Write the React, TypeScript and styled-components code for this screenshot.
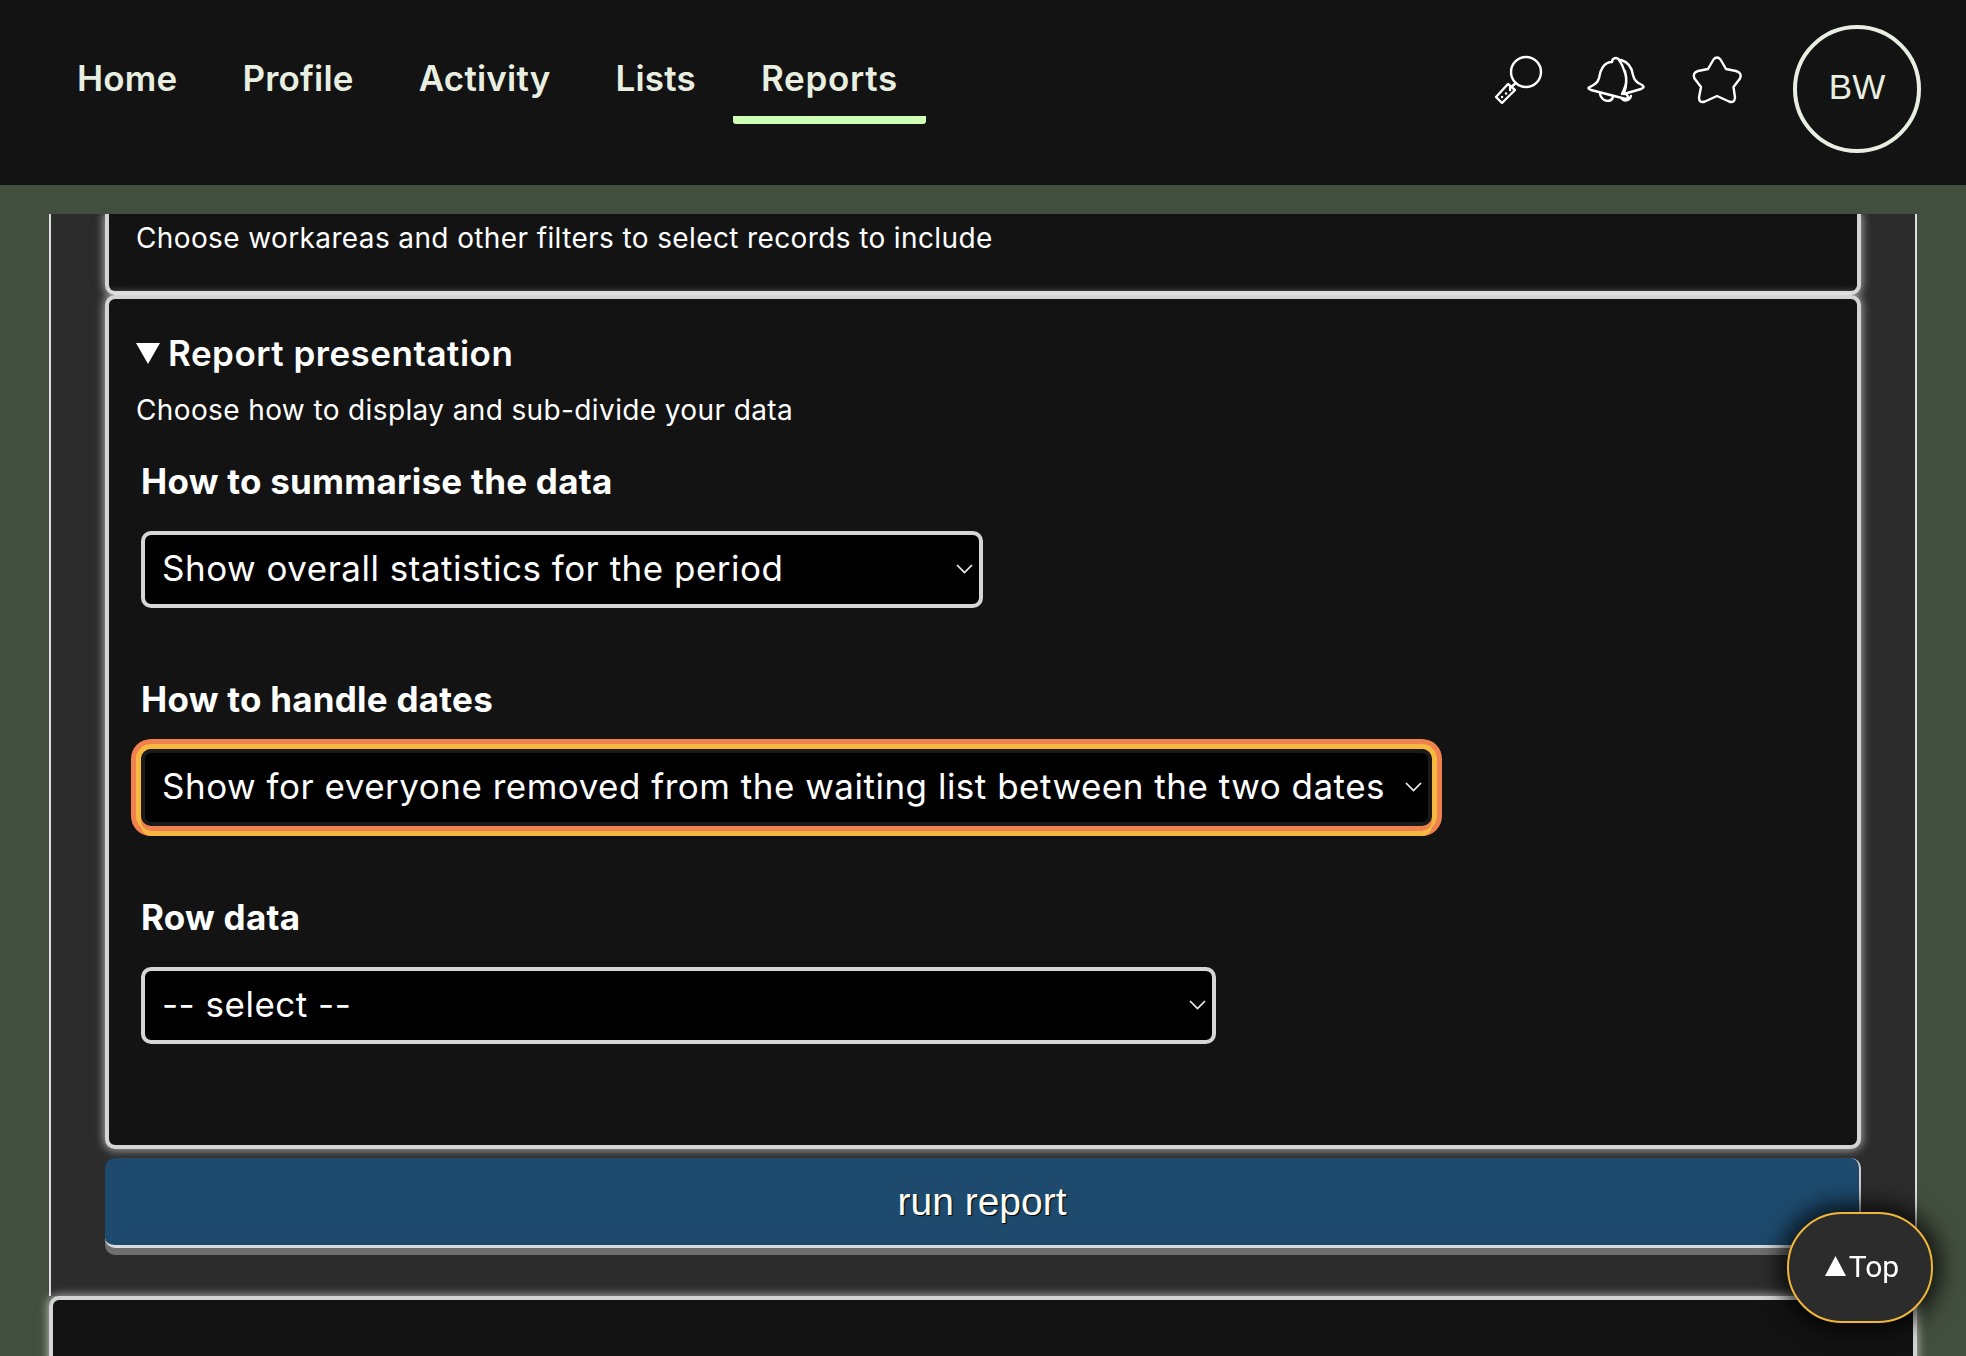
import styled, { createGlobalStyle } from 'styled-components'

const GlobalStyle = createGlobalStyle`
    html, body {
        margin: 0;
        padding: 0;
        background-color: #434f3e;
    }

    * {
        box-sizing: border-box;
    }
`

const Page = styled.div`
    display: flex;
    flex-direction: column;
    height: 100vh;
    overflow: hidden;
    font-family: Inter, "Noto Sans", sans-serif;
    color: #fff;
`

const Header = styled.header`
    display: flex;
    flex: 0 0 185px;
    justify-content: space-between;
    padding: 0 45px 0 49px;
    background-color: #131313;
`

const Nav = styled.nav`
    display: flex;
    gap: 9px;
`

const NavItem = styled.a<{ $active?: boolean }>`
    height: 124px;
    padding: 56px 28px 0;
    font-size: 35px;
    line-height: 44px;
    font-weight: 600;
    letter-spacing: ${(p) => (p.$active ? '0.7px' : '0.2px')};
    color: #e8efe0;
    border-bottom: 8px solid ${(p) => (p.$active ? '#d0ffb8' : 'transparent')};
    border-radius: 0 0 3px 3px;
`

const Tools = styled.div`
    display: flex;
    align-items: flex-start;
`

const ToolIcon = styled.svg<{ $gap: number }>`
    margin: 56px ${(p) => p.$gap}px 0 0;
    fill: none;
    stroke: #fff;
    stroke-width: 2.4;
    stroke-linejoin: round;
    stroke-linecap: round;
    overflow: visible;
`

const Avatar = styled.div`
    display: flex;
    align-items: center;
    justify-content: center;
    width: 128px;
    height: 128px;
    margin-top: 25px;
    padding-bottom: 4px;
    border: 4px solid #e8efe0;
    border-radius: 50%;
    font-family: "Liberation Sans", Arial, sans-serif;
    font-size: 35px;
    color: #e8efe0;
`

const Main = styled.main`
    flex: 1;
    min-height: 0;
    padding: 29px 49px 0;
`

const Panel = styled.section`
    height: 1082px;
    padding: 0 54px;
    overflow: hidden;
    background-color: #2c2c2c;
    border-left: 2px solid #dcdcdc;
    border-right: 2px solid #dcdcdc;
`

const Card = styled.div`
    background-color: #131313;
    border: 4px solid #d4d4d4;
    border-radius: 10px;
    box-shadow: 0 0 10px 1px rgba(255, 255, 255, 0.6);
`

const ClippedCard = styled(Card)`
    padding: 4px 27px 33px;
    border-top: none;
    border-radius: 0 0 10px 10px;
`

const OpenCard = styled(Card)`
    padding: 34px 27px 30px;
`

const Summary = styled.div`
    display: flex;
    align-items: center;
    gap: 8px;
    font-size: 35px;
    line-height: 40px;
    font-weight: 600;
    letter-spacing: 0.5px;
`

const Caret = styled.svg`
    fill: #fff;
`

const Description = styled.p`
    margin: 0;
    font-size: 28px;
    line-height: 40px;
    letter-spacing: 0.38px;
`

const SummaryDescription = styled(Description)`
    margin: 17px 0 31px;
`

const Field = styled.div`
    padding: 0 0 71px 5px;
`

const Label = styled.label`
    display: block;
    margin-bottom: 30px;
    font-size: 35px;
    line-height: 40px;
    font-weight: 700;
    letter-spacing: 0.25px;
`

const SelectBox = styled.div<{ $width: number; $focus?: boolean }>`
    position: relative;
    display: block;
    width: ${(p) => p.$width}px;
    height: 77px;
    border-radius: 10px;
    ${(p) =>
        p.$focus &&
        `box-shadow: 0 5px 0 0 #f0824f, 0 0 0 5px #f5b93f, 0 10px 0 0 #f5b93f, 0 0 0 10px #f0824f;`}
`

const Select = styled.select<{ $focus?: boolean }>`
    width: 100%;
    height: 100%;
    padding: 0 40px 4px 17px;
    appearance: none;
    background: #000;
    color: #fff;
    border: 4px solid ${(p) => (p.$focus ? '#1a1a1a' : '#d6d6d6')};
    border-radius: 10px;
    font-family: Inter, "Noto Sans", sans-serif;
    font-size: 35px;
    letter-spacing: 0.5px;
    outline: none;
`

const Chevron = styled.svg`
    position: absolute;
    top: 33px;
    right: 10px;
    fill: none;
    stroke: #eee;
    stroke-width: 1.7;
    pointer-events: none;
`

const RunButton = styled.button`
    display: block;
    width: 100%;
    height: 90px;
    margin-top: 9px;
    background-color: #1d4a6d;
    color: #fffef8;
    border: none;
    border-right: 2px solid #cfcfcf;
    border-bottom: 3px solid #dcdcdc;
    border-radius: 10px 10px 0 10px;
    box-shadow: 0 7px 0 0 #6f6f6f;
    font-family: "Liberation Sans", Arial, sans-serif;
    font-size: 39px;
    text-shadow: 1px 1px 1px #000;
`

const NextCard = styled(Card)`
    height: 120px;
    margin: 0;
`

const TopButton = styled.a`
    position: fixed;
    left: 1787px;
    top: 1212px;
    display: flex;
    align-items: center;
    justify-content: center;
    width: 146px;
    height: 111px;
    padding: 0 0 3px 4px;
    background-color: #2c2c2c;
    border: 2px solid #f0b63c;
    border-radius: 55px;
    box-shadow: 0 0 22px 8px rgba(0, 0, 0, 0.75);
    font-family: Roboto, sans-serif;
    font-size: 30px;
    color: #fff;
`

const TopArrow = styled.svg`
    margin-right: 3px;
    fill: #fff;
`

const SearchIcon = () => (
    <ToolIcon $gap={44} width="48" height="48" viewBox="0 0 48 48">
        <circle cx="31" cy="16" r="15" />
        <path d="M21 27 L15 32" />
        <path d="M1 41 L13 28 L20 34 L7 47 Z" />
        <path d="M7 41 h.1 M11 37.5 h.1 M15 34 h.1" />
    </ToolIcon>
)

const BellIcon = () => (
    <ToolIcon $gap={48} width="58" height="48" viewBox="0 0 58 48">
        <path d="M35 38 C39 30 41 24 37 14 C35 7 30 2 33 5 C30 0 25 2 25 6 C17 6 13 14 12 22 C11 27 7 29 3 31 C0 32 2 33 4 34 L35 42 C38 43 41 43 41 41 C41 39 39 38 37 37 C39 32 41 26 38 15" />
        <path d="M34 4 C41 6 45 12 46 19 C47 24 50 27 55 29 C58 31 56 32 54 33 L37 38" />
        <path d="M13 38 C15 46 24 47 26 41" />
        <path d="M35 43 C38 46 43 44 44 40" />
    </ToolIcon>
)

const StarIcon = () => (
    <ToolIcon $gap={50} width="50" height="48" viewBox="0 0 50 48">
        <path d="M15 13 L20.5 3.5 Q24 -0.5 27.5 3.5 L33 13 L43 15 Q49.5 17 47 22.5 L40.5 31 L42 41.5 Q41.5 47.5 36 45.5 L24 40 L12 45.5 Q6 47.5 6 41.5 L8 31 L1.5 22.5 Q-1 17 5 15 Z" />
    </ToolIcon>
)

const ChevronDown = () => (
    <Chevron width="17" height="10" viewBox="0 0 17 10">
        <path d="M1 1 L8.5 8.5 L16 1" />
    </Chevron>
)

const fields = [
    { label: 'How to summarise the data', value: 'Show overall statistics for the period', width: 842 },
    { label: 'How to handle dates', value: 'Show for everyone removed from the waiting list between the two dates', width: 1291, focus: true },
    { label: 'Row data', value: '-- select --', width: 1075 },
]

export default function App() {
    return (
        <Page>
            <GlobalStyle />
            <Header>
                <Nav>
                    <NavItem>Home</NavItem>
                    <NavItem>Profile</NavItem>
                    <NavItem>Activity</NavItem>
                    <NavItem>Lists</NavItem>
                    <NavItem $active>Reports</NavItem>
                </Nav>
                <Tools>
                    <SearchIcon />
                    <BellIcon />
                    <StarIcon />
                    <Avatar>BW</Avatar>
                </Tools>
            </Header>
            <Main>
                <Panel>
                    <ClippedCard>
                        <Description>Choose workareas and other filters to select records to include</Description>
                    </ClippedCard>
                    <OpenCard>
                        <Summary>
                            <Caret width="24" height="22" viewBox="0 0 24 22">
                                <path d="M0 1 H24 L12 22 Z" />
                            </Caret>
                            Report presentation
                        </Summary>
                        <SummaryDescription>Choose how to display and sub-divide your data</SummaryDescription>
                        {fields.map((field) => (
                            <Field key={field.label}>
                                <Label>{field.label}</Label>
                                <SelectBox $width={field.width} $focus={field.focus}>
                                    <Select $focus={field.focus} defaultValue={field.value}>
                                        <option>{field.value}</option>
                                    </Select>
                                    <ChevronDown />
                                </SelectBox>
                            </Field>
                        ))}
                    </OpenCard>
                    <RunButton>run report</RunButton>
                </Panel>
                <NextCard />
            </Main>
            <TopButton>
                <TopArrow width="21" height="20" viewBox="0 0 21 20">
                    <path d="M10.5 0 L21 20 H0 Z" />
                </TopArrow>
                Top
            </TopButton>
        </Page>
    )
}
